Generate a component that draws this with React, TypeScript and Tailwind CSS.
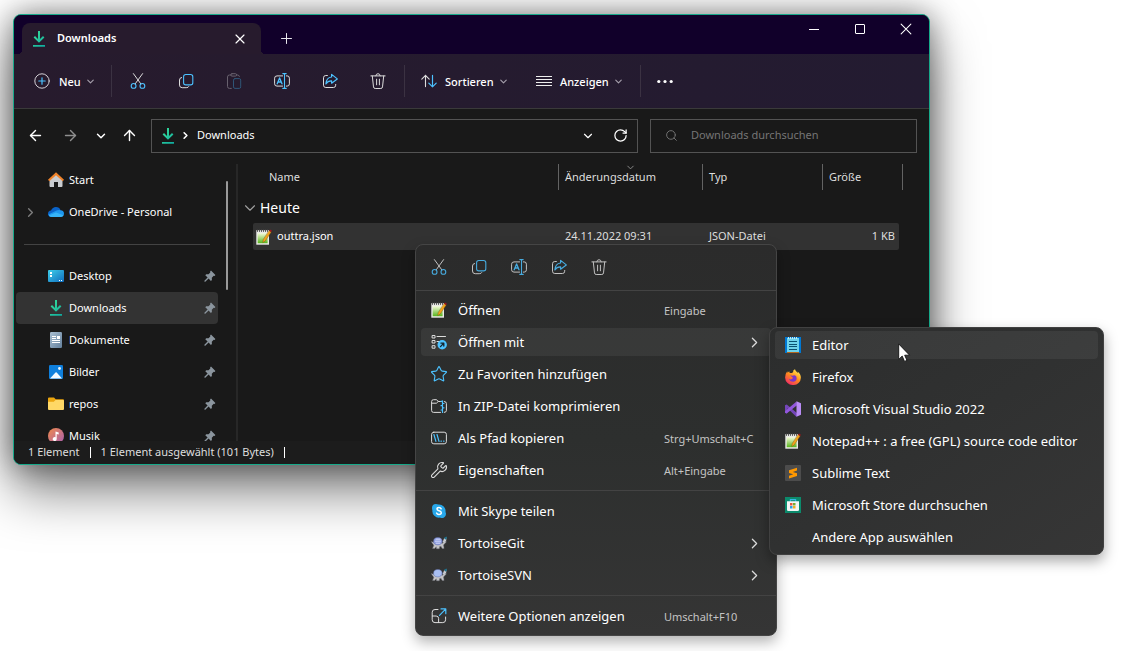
import type { ReactNode } from 'react';
import { ArrowLeft, ArrowRight, ArrowUp, ChevronDown, ChevronRight, RotateCw, Search, Star, Wrench, X } from 'lucide-react';

type IconProps = { className?: string };

const BLUE = '#4cc2ff';

function Glyph({ children, className = 'size-4' }: { children: ReactNode; className?: string }) {
  return (
    <svg viewBox="0 0 16 16" fill="none" strokeLinecap="round" strokeLinejoin="round" aria-hidden="true" className={`shrink-0 ${className}`}>
      {children}
    </svg>
  );
}

function NewIcon() {
  return (
    <Glyph>
      <circle cx="8" cy="8" r="7.2" stroke="#d4d0d6" />
      <path d="M8 4.8v6.4M4.8 8h6.4" stroke={BLUE} strokeWidth="1.2" />
    </Glyph>
  );
}

function CutIcon() {
  return (
    <Glyph>
      <path d="M3.4.6l7.4 10.2M12.6.6L5.2 10.8" stroke="#dcdcdc" />
      <circle cx="3.6" cy="12.9" r="2.4" stroke={BLUE} strokeWidth="1.1" />
      <circle cx="12.4" cy="12.9" r="2.4" stroke={BLUE} strokeWidth="1.1" />
    </Glyph>
  );
}

function CopyIcon() {
  return (
    <Glyph>
      <path d="M3.6 4.5Q1.5 4.7 1.5 7v5Q1.5 14.7 4.2 14.7h4Q10.4 14.7 10.8 13.6" stroke="#dcdcdc" />
      <rect x="5.6" y="1.5" width="9.2" height="10.4" rx="2.2" stroke={BLUE} strokeWidth="1.1" />
    </Glyph>
  );
}

function PasteIcon() {
  return (
    <Glyph>
      <path d="M4.8 2H3.4Q1.5 2 1.5 4v9.4q0 2 1.9 2h1.9M10.6 2h1q1.5.1 1.8 1.4" stroke="#68616e" />
      <rect x="4.8" y="0.7" width="5.8" height="2.4" rx="1.2" stroke="#68616e" />
      <rect x="7.5" y="5.6" width="7.2" height="9.8" rx="1.5" stroke="#2f5577" />
    </Glyph>
  );
}

function RenameIcon() {
  return (
    <Glyph>
      <path d="M8.6 2.9H3Q.6 2.9.6 5.2v5.6Q.6 13.1 3 13.1h5.6M12.3 2.9h.9q2.2 0 2.2 2.3v5.6q0 2.3-2.2 2.3h-.9" stroke="#dcdcdc" />
      <path d="M3.2 10.8l2.4-5.9L8 10.8M4 9h3.2" stroke={BLUE} strokeWidth="1.3" />
      <path d="M10.5.6v14.8M8.8.6h3.4M8.8 15.4h3.4" stroke={BLUE} strokeWidth="1.1" />
    </Glyph>
  );
}

function ShareIcon() {
  return (
    <Glyph>
      <path d="M5.4 2.5H3.8Q1.5 2.5 1.5 4.8v7.4q0 2.3 2.3 2.3h7.6q2.3 0 2.3-2.3v-.8" stroke="#dcdcdc" />
      <path d="M9.6 1.4l5.7 4.5-5.7 4.3V7.9Q6 7.7 3.9 10.9 4.3 4.6 9.6 4z" stroke={BLUE} strokeWidth="1.2" />
    </Glyph>
  );
}

function TrashIcon() {
  return (
    <Glyph>
      <path d="M.9 2.9h14.2M5.8 2.8Q6 .7 8 .7t2.200 2.100M2.300 3l1.200 10.900q.2 1.600 1.700 1.600h5.600q1.500 0 1.700-1.600L13.700 3M6.600 6.200v5.600M9.400 6.200v5.600" stroke="#dcdcdc" />
    </Glyph>
  );
}

function SortIcon() {
  return (
    <Glyph>
      <path d="M4.5 13.6V2.4M.8 6.2l3.7-3.8 3.7 3.8" stroke="#dcdcdc" strokeWidth="1.1" />
      <path d="M11.5 2.4v11.4M7.8 10.1l3.7 3.7 3.7-3.7" stroke={BLUE} strokeWidth="1.200" />
    </Glyph>
  );
}

function ListIcon() {
  return (
    <Glyph>
      <path d="M0 3.5h16M0 6.5h16M0 9.5h16M0 12.5h16" stroke="#eeeeee" strokeLinecap="butt" />
    </Glyph>
  );
}

function DotsIcon() {
  return (
    <Glyph>
      <g fill="#ffffff">
        <circle cx="1.8" cy="8.500" r="1.600" />
        <circle cx="8" cy="8.500" r="1.600" />
        <circle cx="14.2" cy="8.500" r="1.600" />
      </g>
    </Glyph>
  );
}

function DownloadIcon() {
  return (
    <Glyph>
      <defs>
        <linearGradient id="dl" x1="0" y1="0" x2="16" y2="16" gradientUnits="userSpaceOnUse">
          <stop offset="0.3" stopColor="#2fd39a" />
          <stop offset="1" stopColor="#0aa5a0" />
        </linearGradient>
      </defs>
      <path d="M7 0h2v8l3-3 1.400 1.400L8 11.800 2.600 6.400 4 5l3 3zM2 14h12v1.800H2z" fill="url(#dl)" />
    </Glyph>
  );
}

function HomeIcon() {
  return (
    <Glyph>
      <path d="M1.500 7.500L8 2l6.500 5.500V14q0 1-1 1H10v-5H6v5H2.500q-1 0-1-1z" fill="#c9ccd0" />
      <path d="M8 .2l8 7.500-1.300 1.500L8 3.200 1.300 9.200 0 7.700z" fill="#f0832a" />
    </Glyph>
  );
}

function CloudIcon() {
  return (
    <Glyph>
      <path d="M3.500 13Q0 12.600 0 9.700 0 7 3 6.600 4.500 3 8 3q3.300 0 4.600 3.200L9 11z" fill="#0a63c9" />
      <path d="M3.500 13Q.8 12.600.3 10.600L7.500 7q3-1.400 5.100-.8Q16 6.600 16 9.700T12.600 13z" fill="#1d96ee" />
      <path d="M3.500 13Q1.500 12.800.8 11.500L8 8.500l7.500 2.800Q14.700 13 12.600 13z" fill="#37b4f7" />
    </Glyph>
  );
}

function DesktopIcon() {
  return (
    <Glyph>
      <defs>
        <linearGradient id="desk" x1="0" y1="0" x2="1" y2="1">
          <stop stopColor="#3fd0ea" />
          <stop offset="1" stopColor="#0f6cbd" />
        </linearGradient>
      </defs>
      <rect y="2" width="16" height="12" rx="1" fill="url(#desk)" />
      <path d="M2 4h2v2H2zM2 7h2v2H2zM11 12h1v1h-1zM13 12h1v1h-1z" fill="#fff" />
    </Glyph>
  );
}

function DocumentsIcon() {
  return (
    <Glyph>
      <defs>
        <linearGradient id="docs" x1="0" y1="0" x2="1" y2="1">
          <stop stopColor="#a9bfd2" />
          <stop offset="1" stopColor="#64809c" />
        </linearGradient>
      </defs>
      <rect x="2" width="12" height="16" rx="1.200" fill="url(#docs)" />
      <path d="M4 4h4v1H4zM4 6h4v1H4zM9 4h3v3H9zM4 8h8v1H4zM4 10h8v1H4z" fill="#fff" />
    </Glyph>
  );
}

function PicturesIcon() {
  return (
    <Glyph>
      <rect x="1" y="1" width="14" height="14" rx="1.200" fill="#0f7fdc" />
      <path d="M2 14.500l5.500-6q.6-.6 1.200 0l5.300 6z" fill="#f2f9ff" />
      <circle cx="11.500" cy="4.500" r="1.400" fill="#f2f9ff" />
    </Glyph>
  );
}

function FolderIcon() {
  return (
    <Glyph>
      <path d="M0 2.500Q0 1.500 1 1.500h5l1.700 1.700H15q1 0 1 1V7H0z" fill="#eba50f" />
      <path d="M0 5.800h5.800L7.500 4H15q1 0 1 1v8q0 1-1 1H1q-1 0-1-1z" fill="#ffd866" />
    </Glyph>
  );
}

function MusicIcon() {
  return (
    <Glyph>
      <defs>
        <linearGradient id="music" x1="0" y1="0" x2="1" y2="1">
          <stop stopColor="#f08a4b" />
          <stop offset="1" stopColor="#a85fb0" />
        </linearGradient>
      </defs>
      <circle cx="8" cy="8" r="8" fill="url(#music)" />
      <path d="M7.500 3.500L10.700 4.500v2L8.700 6v5a2 2 0 1 1-1.200-1.800z" fill="#fff" />
    </Glyph>
  );
}

function PinIcon() {
  return (
    <svg viewBox="0 0 12 12" aria-hidden="true" className="size-3 shrink-0">
      <path d="M7 .6l4.400 4.400-.8 1-.9-.2-1.900 1.900.1 2.300-1 .9-2.300-2.300L1.300 11.700l-1-.1.1-.9 3.200-3.200L1.300 5.200l.9-1 2.300.1 1.800-1.900L6.100 1.500z" fill="#8b959e" />
    </svg>
  );
}

function NotepadPlusIcon() {
  return (
    <Glyph>
      <defs>
        <linearGradient id="npp" x1="0" y1="0" x2="0" y2="1">
          <stop stopColor="#f4fbd8" />
          <stop offset="1" stopColor="#57b41c" />
        </linearGradient>
      </defs>
      <rect x="0.300" y="1.200" width="12.700" height="14.500" fill="#e9e9e5" />
      <rect x="1.700" y="4.200" width="9.900" height="10" fill="url(#npp)" />
      <path d="M1.500.5v2.400M3.500.5v2.400M5.500.5v2.400M7.500.5v2.400M9.500.5v2.400M11.500.5v2.400" stroke="#4b4b4b" strokeWidth=".9" strokeLinecap="butt" />
      <path d="M13.300 1.600l1.900 1.300-6 9.200-2.500 1.500.5-2.800z" fill="#f0a31c" stroke="#7a5210" strokeWidth=".4" />
      <path d="M14 .4l1.900 1.300-.8 1.300-1.900-1.300z" fill="#a3141c" />
    </Glyph>
  );
}

function OpenWithIcon() {
  return (
    <Glyph>
      <path d="M1.500 1.500h2.500v2.500H1.500zM1.500 6.500h2.500v2.500H1.500zM1.500 11.700h2.500v2.500H1.500zM6 2.500h8.500M6 7.500h2.500" stroke="#dcdcdc" strokeLinejoin="miter" />
      <circle cx="11.200" cy="10.800" r="4.700" fill={BLUE} />
      <path d="M9.500 12.600l3.200-3.300M9.900 9.100h2.900V12" stroke="#14242e" strokeWidth="1.300" />
    </Glyph>
  );
}

function ZipIcon() {
  return (
    <Glyph>
      <path d="M9.500 3.500H7.200L5.600 1.700H2.500Q.6 1.700.6 3.600v8.900q0 1.900 1.900 1.900h7M.8 5.200h4.600l1.700-1.600M13.300 3.500q2.100 0 2.100 2v7q0 1.900-2.100 1.900" stroke="#dcdcdc" />
      <path d="M11.500 2.800v11.700M10 3.300h1.500M11.500 5.500H13M10 7.700h1.500M11.500 9.800H13M10 12h1.500" stroke={BLUE} strokeWidth="1.200" />
    </Glyph>
  );
}

function PathIcon() {
  return (
    <Glyph>
      <rect x=".6" y="2.200" width="14.800" height="11.600" rx="2.200" stroke="#dcdcdc" />
      <path d="M2.900 4.500l2 6.800M6 4.500l2 6.800M10 11.200h.4M12.600 11.200h.4" stroke={BLUE} strokeWidth="1.200" />
    </Glyph>
  );
}

function MoreOptionsIcon() {
  return (
    <Glyph>
      <path d="M7 1.500H4Q1.200 1.500 1.200 4.200v7.600q0 2.800 2.800 2.800h7.800q2.800 0 2.800-2.800V9M1.400 8h3.700Q7.600 8 7.600 10.500v4" stroke="#dcdcdc" />
      <path d="M8.500 7.300l6.100-6.200M10 .9h4.800v4.800" stroke={BLUE} strokeWidth="1.200" />
    </Glyph>
  );
}

function SkypeIcon() {
  return (
    <Glyph>
      <path d="M5 1q1.400 0 2.200.5A6.600 6.600 0 0 1 14.500 9q.5.800.5 2a4.100 4.100 0 0 1-6 3.600A6.600 6.600 0 0 1 1.400 7.200Q1 6.300 1 5a4 4 0 0 1 4-4z" fill="#28a8ea" />
      <path d="M10.200 5.800Q9.600 4.600 8 4.600q-2 0-2 1.500 0 1.300 2 1.700 2.300.5 2.300 2 0 1.700-2.300 1.700-1.900 0-2.400-1.400" stroke="#fff" strokeWidth="1.500" />
    </Glyph>
  );
}

function TortoiseIcon({ plain }: { plain?: boolean }) {
  return (
    <Glyph>
      <path d="M.2 6.500l3 1 8.300.8 2.500-2.300 1.500.8-3 3.200.6 3.400h-2l-1-2h-1.400l-.4 2.400H5.500l-.3-2-1.500 1.600H1.500l1.300-3z" fill="#c3c3c6" stroke="#6d6f76" strokeWidth=".4" />
      <path d="M11.500 7.500l1.400-3.700 2.700-1.500-.4 3-2 2.200z" fill="#c9ccd0" />
      <path d="M13.200 2.600l2.500-1.100v2.400l-1.500.6z" fill="#1a6f8c" />
      <ellipse cx="6.900" cy="6.200" rx="4.300" ry="3.700" fill={plain ? '#a9bff2' : '#8f9ee0'} stroke="#5e6da8" strokeWidth=".5" />
      {!plain && <path d="M4.300 6.200h5.200M5 4.200h4M5.200 8.200h3.800" stroke="#dfe6ff" strokeWidth=".8" />}
    </Glyph>
  );
}

function EditorIcon() {
  return (
    <Glyph>
      <path d="M0 0h16v16H0z" fill="#0078d4" />
      <path d="M2 1h12v14H2z" fill="#6fd3ec" />
      <path d="M2 15h12v1H2z" fill="#b5651d" />
      <path d="M3.500 0v2M5.500 0v2M7.500 0v2M9.500 0v2M11.500 0v2" stroke="#bfeaf6" strokeLinecap="butt" />
      <path d="M4 4.500h8M4 7.500h8M4 9.500h8M4 12.500h8" stroke="#0a5273" strokeLinecap="butt" />
    </Glyph>
  );
}

function FirefoxIcon() {
  return (
    <Glyph>
      <defs>
        <linearGradient id="ff" x1="0.800" y1="0.100" x2="0.200" y2="1">
          <stop stopColor="#ffe14a" />
          <stop offset="0.450" stopColor="#ff8a1c" />
          <stop offset="1" stopColor="#f0246c" />
        </linearGradient>
      </defs>
      <path d="M10 .2q.4 1.800 1.800 2.800l1.200 1.300q-.2-1-.6-1.700Q15.900 5 15.900 8.800A7.400 7.400 0 0 1 8.200 16 7.700 7.700 0 0 1 .1 8.400Q.1 5 2.200 2.300l.4 1.500L4.200 2.300l.5 1.600 2.200.2Q8.700 3.300 8.200 1.700 8.500.7 10 .2z" fill="url(#ff)" />
      <path d="M5 6.500q1.600-.2 2.600.3 2-1.300 3.700.7 1.400 4.200-2.600 5.200-4 .2-4.700-3 .9 1 2.300.6L7.800 9.200 7.500 8.300z" fill="#7a35c8" />
    </Glyph>
  );
}

function VisualStudioIcon() {
  return (
    <Glyph>
      <path d="M0 4.300L1.700 3.400 12 12v3.400l-1 .1L2.500 7.300v4.200l-1 1L0 11.700z" fill="#7446b8" />
      <path d="M11.500.4L12 4.200 1.700 12.600 0 11.700v-1.500z" fill="#9257dd" />
      <path d="M11.500.3L16 2.300v11.400l-4.500 2z" fill="#b98cf5" />
    </Glyph>
  );
}

function SublimeIcon() {
  return (
    <Glyph>
      <rect width="16" height="16" rx="1" fill="#4c4c4c" />
      <path d="M4 5.200l8-2.500v2.900L7.800 7 12 8.200v2.900l-8 2.500v-2.900l4.200-1.400L4 8.100z" fill="#ff9800" />
    </Glyph>
  );
}

function StoreIcon() {
  return (
    <Glyph>
      <path d="M0 0h16v16H0z" fill="#0c8a6c" />
      <path d="M5.300 4.500V2.600h5.400v1.900" stroke="#38b7e8" strokeWidth="1.100" />
      <path d="M2 4.300h12v8.400q0 1.300-1.300 1.300H3.300Q2 14 2 12.700z" fill="#f3f5f5" />
      <path d="M5 6h2.500v2.500H5z" fill="#e5543a" />
      <path d="M8 6h2.500v2.500H8z" fill="#75ab32" />
      <path d="M5 9h2.500v2.500H5z" fill="#2f9fe0" />
      <path d="M8 9h2.500v2.500H8z" fill="#f0b01e" />
    </Glyph>
  );
}

function Caret({ className = 'text-[#a59fab]' }: IconProps) {
  return <ChevronDown size={11} strokeWidth={2.500} className={`shrink-0 ${className}`} aria-hidden="true" />;
}

const commandTools = [
  { label: 'Ausschneiden', icon: <CutIcon /> },
  { label: 'Kopieren', icon: <CopyIcon /> },
  { label: 'Einfügen', icon: <PasteIcon />, disabled: true },
  { label: 'Umbenennen', icon: <RenameIcon /> },
  { label: 'Freigeben', icon: <ShareIcon /> },
  { label: 'Löschen', icon: <TrashIcon /> },
];

const pinned = [
  { label: 'Desktop', icon: <DesktopIcon /> },
  { label: 'Downloads', icon: <DownloadIcon />, active: true },
  { label: 'Dokumente', icon: <DocumentsIcon /> },
  { label: 'Bilder', icon: <PicturesIcon /> },
  { label: 'repos', icon: <FolderIcon /> },
  { label: 'Musik', icon: <MusicIcon /> },
];

type MenuEntry = { label: string; icon?: ReactNode; shortcut?: string; submenu?: boolean; active?: boolean };

const contextGroups: MenuEntry[][] = [
  [
    { label: 'Öffnen', icon: <NotepadPlusIcon />, shortcut: 'Eingabe' },
    { label: 'Öffnen mit', icon: <OpenWithIcon />, submenu: true, active: true },
    { label: 'Zu Favoriten hinzufügen', icon: <Star size={18} strokeWidth={1.500} className="-mx-px shrink-0 text-[#4cc2ff]" aria-hidden="true" /> },
    { label: 'In ZIP-Datei komprimieren', icon: <ZipIcon /> },
    { label: 'Als Pfad kopieren', icon: <PathIcon />, shortcut: 'Strg+Umschalt+C' },
    { label: 'Eigenschaften', icon: <Wrench size={18} strokeWidth={1.500} className="-mx-px shrink-0 text-[#dcdcdc]" aria-hidden="true" />, shortcut: 'Alt+Eingabe' },
  ],
  [
    { label: 'Mit Skype teilen', icon: <SkypeIcon /> },
    { label: 'TortoiseGit', icon: <TortoiseIcon />, submenu: true },
    { label: 'TortoiseSVN', icon: <TortoiseIcon plain />, submenu: true },
  ],
  [{ label: 'Weitere Optionen anzeigen', icon: <MoreOptionsIcon />, shortcut: 'Umschalt+F10' }],
];

const openWith: MenuEntry[] = [
  { label: 'Editor', icon: <EditorIcon />, active: true },
  { label: 'Firefox', icon: <FirefoxIcon /> },
  { label: 'Microsoft Visual Studio 2022', icon: <VisualStudioIcon /> },
  { label: 'Notepad++ : a free (GPL) source code editor', icon: <NotepadPlusIcon /> },
  { label: 'Sublime Text', icon: <SublimeIcon /> },
  { label: 'Microsoft Store durchsuchen', icon: <StoreIcon /> },
  { label: 'Andere App auswählen' },
];

function TitleBar() {
  return (
    <div className="flex h-[39px] items-end bg-[#11002a]">
      <div className="relative ml-2 flex h-[31px] w-[239px] items-center rounded-t-lg bg-[#271b2d] pl-[9px] before:absolute before:bottom-0 before:-left-1 before:size-1 before:bg-[radial-gradient(circle_at_0_0,transparent_4px,#271b2d_4px)] after:absolute after:-right-1 after:bottom-0 after:size-1 after:bg-[radial-gradient(circle_at_100%_0,transparent_4px,#271b2d_4px)]">
        <DownloadIcon />
        <span className="ml-2.5 text-[11px] font-semibold text-white">Downloads</span>
        <button aria-label="Tab schließen" className="mr-[13px] ml-auto flex size-4 items-center justify-center text-white">
          <X size={16} strokeWidth={1.750} />
        </button>
      </div>
      <button aria-label="Neuer Tab" className="ml-[17px] flex h-8 w-4 items-center justify-center">
        <Glyph>
          <path d="M8.500 3.500v10M3.500 8.500h10" stroke="#e8e6ec" />
        </Glyph>
      </button>
      <div className="ml-auto flex self-start">
        <button aria-label="Minimieren" className="flex h-7 w-[46px] items-center justify-center">
          <span className="h-px w-2.5 bg-white" />
        </button>
        <button aria-label="Maximieren" className="flex h-7 w-[46px] items-center justify-center">
          <span className="size-2.5 rounded-[1px] border border-white" />
        </button>
        <button aria-label="Schließen" className="flex h-7 w-[46px] items-center justify-center">
          <Glyph className="size-3">
            <path d="M1.500 1.500l13 13M14.500 1.500l-13 13" stroke="#fff" strokeWidth="1.400" />
          </Glyph>
        </button>
      </div>
    </div>
  );
}

function CommandBar() {
  const divider = <span className="h-8 w-px shrink-0 bg-[#3b3242]" />;
  return (
    <div className="flex h-[55px] items-center border-b border-[#3a3a3a] bg-linear-to-r from-[#271b2d] to-[#231b31] pl-5 text-[11px] font-medium text-white">
      <button className="flex w-[77px] items-center">
        <NewIcon />
        <span className="mr-1 ml-[9px] pt-0.5">Neu</span>
        <Caret />
      </button>
      {divider}
      <div className="mx-0.5 flex">
        {commandTools.map((tool) => (
          <button key={tool.label} aria-label={tool.label} disabled={tool.disabled} className="flex h-8 w-12 items-center justify-center">
            {tool.icon}
          </button>
        ))}
      </div>
      {divider}
      <button className="flex w-[115px] items-center pl-4">
        <SortIcon />
        <span className="mr-1 ml-2 pt-0.5">Sortieren</span>
        <Caret />
      </button>
      <button className="flex w-[120px] items-center pl-4">
        <ListIcon />
        <span className="mr-1 ml-2 pt-0.5">Anzeigen</span>
        <Caret />
      </button>
      {divider}
      <button aria-label="Mehr anzeigen" className="flex h-8 w-12 items-center justify-center">
        <DotsIcon />
      </button>
    </div>
  );
}

function NavigationBar() {
  return (
    <div className="flex h-[55px] items-center bg-[#191919] pr-3 pb-0.5 pl-[3px] text-white">
      <button aria-label="Zurück" className="flex h-8 w-9 items-center justify-center">
        <ArrowLeft size={17} strokeWidth={2} />
      </button>
      <button aria-label="Vorwärts" className="flex h-8 w-[34px] items-center justify-center text-[#8f8f8f]">
        <ArrowRight size={17} strokeWidth={2} />
      </button>
      <button aria-label="Zuletzt verwendete Orte" className="flex h-8 w-7 items-center justify-center">
        <ChevronDown size={14} strokeWidth={2.500} />
      </button>
      <button aria-label="Nach oben" className="mr-[7px] flex h-8 w-[29px] items-center justify-center">
        <ArrowUp size={17} strokeWidth={2} />
      </button>
      <div className="flex h-[34px] min-w-0 flex-1 items-center border border-[#535353] pl-2">
        <DownloadIcon />
        <ChevronRight size={11} strokeWidth={3.500} className="ml-1" aria-hidden="true" />
        <a href="#downloads" className="ml-1.5 text-[11px]">
          Downloads
        </a>
        <button aria-label="Vorherige Orte" className="ml-auto flex h-8 w-[33px] items-center justify-center">
          <ChevronDown size={14} strokeWidth={2} />
        </button>
        <button aria-label="Aktualisieren" className="flex h-8 w-[33px] items-center justify-center">
          <RotateCw size={15} strokeWidth={2} />
        </button>
      </div>
      <label className="ml-3 flex h-[34px] w-[267px] items-center border border-[#535353] pl-3.5 text-[#757575]">
        <Search size={13} strokeWidth={1.750} aria-hidden="true" />
        <input type="search" aria-label="Downloads durchsuchen" placeholder="Downloads durchsuchen" className="ml-[13px] min-w-0 flex-1 bg-transparent text-[11px] outline-none placeholder:text-[#757575]" />
      </label>
    </div>
  );
}

function Sidebar() {
  const row = 'flex h-8 items-center';
  return (
    <nav aria-label="Navigationsbereich" className="flex w-[224px] shrink-0 border-r-2 border-[#272727] pl-0.5 text-[11px] text-white">
      <ul className="w-[202px]">
        <li>
          <a href="#start" className={`${row} pl-8`}>
            <HomeIcon />
            <span className="ml-[5px]">Start</span>
          </a>
        </li>
        <li>
          <a href="#onedrive" className={row}>
            <span className="mr-1 flex w-7 justify-center text-[#7d7d7d]">
              <ChevronRight size={15} strokeWidth={2.250} aria-hidden="true" />
            </span>
            <CloudIcon />
            <span className="ml-[5px]">OneDrive - Personal</span>
          </a>
        </li>
        <li role="separator" className="flex h-8 items-center px-2">
          <span className="h-px flex-1 bg-[#434343]" />
        </li>
        {pinned.map((place) => (
          <li key={place.label}>
            <a href={`#${place.label}`} className={`${row} pr-0.5 pl-8 ${place.active ? 'rounded-sm bg-[#333333]' : ''}`}>
              {place.icon}
              <span className="ml-[5px] flex-1">{place.label}</span>
              <PinIcon />
            </a>
          </li>
        ))}
      </ul>
      <span className="mt-[17px] ml-2 h-[109px] w-0.5 rounded-full bg-[#9a9a9a]" />
    </nav>
  );
}

function FileList() {
  const head = 'border-r border-[#636363] p-0 text-left font-normal text-[#dedede]';
  return (
    <div className="min-w-0 flex-1 pr-[26px]">
      <table className="w-full table-fixed border-separate border-spacing-0 text-[11px]">
        <colgroup>
          <col className="w-[15px]" />
          <col />
          <col className="w-[144px]" />
          <col className="w-[120px]" />
          <col className="w-[76px]" />
          <col className="w-1" />
        </colgroup>
        <thead>
          <tr className="h-[26px]">
            <th colSpan={2} className={`${head} pl-[31px]`}>
              Name
            </th>
            <th aria-sort="descending" className={`${head} relative pl-1.5`}>
              Änderungsdatum
              <ChevronDown size={11} strokeWidth={1.750} className="absolute -top-0.5 left-[66px] text-[#a0a0a0]" aria-hidden="true" />
            </th>
            <th className={`${head} pl-1.5`}>Typ</th>
            <th colSpan={2} className={`${head} pl-1.5`}>
              Größe
            </th>
          </tr>
        </thead>
        <tbody>
          <tr className="h-[33px]">
            <td colSpan={6} className="p-0 pt-0.5 pl-[3px] text-sm text-white">
              <span className="flex items-center gap-px">
                <ChevronDown size={18} strokeWidth={1.500} className="text-[#a0a0a0]" aria-hidden="true" />
                Heute
              </span>
            </td>
          </tr>
          <tr className="h-[27px] text-[#dedede]">
            <td className="p-0" />
            <td className="rounded-l-xs bg-[#323232] p-0 pl-[3px] text-white">
              <span className="flex items-center gap-[5px]">
                <NotepadPlusIcon />
                outtra.json
              </span>
            </td>
            <td className="bg-[#323232] p-0 pl-1.5">24.11.2022 09:31</td>
            <td className="bg-[#323232] p-0 pl-1.5">JSON-Datei</td>
            <td className="rounded-r-xs bg-[#323232] p-0 pr-1 text-right">1 KB</td>
            <td className="p-0" />
          </tr>
        </tbody>
      </table>
    </div>
  );
}

function MenuItem({ entry }: { entry: MenuEntry }) {
  return (
    <li role="none" className="flex h-8 items-center px-[5px]">
      <button role="menuitem" aria-haspopup={entry.submenu ? 'menu' : undefined} className={`flex h-7 w-full items-center rounded px-2.5 text-left text-white ${entry.active ? 'bg-white/6' : ''}`}>
        <span className="mr-[11px] flex size-4 shrink-0 items-center justify-center">{entry.icon}</span>
        <span className="flex-1 pt-0.5 whitespace-nowrap">{entry.label}</span>
        {entry.shortcut && <span className="w-[97px] shrink-0 pt-0.5 text-[11px] whitespace-nowrap text-[#c4c4c4]">{entry.shortcut}</span>}
        {entry.submenu && <ChevronRight size={17} strokeWidth={1.750} className="-mr-0.5 text-[#dcdcdc]" aria-hidden="true" />}
      </button>
    </li>
  );
}

function ContextMenu() {
  return (
    <div role="menu" aria-label="Kontextmenü" className="absolute top-[244px] left-[415px] w-[362px] rounded-lg border border-[#454545] bg-linear-to-b from-[#2b2b2b] via-[#2d2f2e] to-[#353535] pb-[3px] text-[13px] shadow-[0_6px_14px_rgba(0,0,0,0.300)]">
      <div className="flex h-[45px] items-center pb-0.5 pl-[3px] opacity-85">
        {commandTools
          .filter((tool) => !tool.disabled)
          .map((tool) => (
            <button key={tool.label} role="menuitem" aria-label={tool.label} className="flex h-8 w-10 items-center justify-center">
              {tool.icon}
            </button>
          ))}
      </div>
      {contextGroups.map((group) => (
        <ul key={group[0].label} role="group" className="border-t border-[#434343] py-1 first-of-type:pt-[3px] last:pb-0">
          {group.map((entry) => (
            <MenuItem key={entry.label} entry={entry} />
          ))}
        </ul>
      ))}
    </div>
  );
}

function OpenWithMenu() {
  return (
    <ul role="menu" aria-label="Öffnen mit" className="absolute top-[327px] left-[769px] w-[335px] rounded-lg border border-[#414141] bg-linear-to-br from-[#2c2d2d] via-[#303131] to-[#363636] py-px text-[13px] shadow-[0_6px_14px_rgba(0,0,0,0.350)]">
      {openWith.map((entry) => (
        <MenuItem key={entry.label} entry={entry} />
      ))}
    </ul>
  );
}

function Pointer() {
  return (
    <svg viewBox="0 0 13 20" aria-hidden="true" className="pointer-events-none absolute top-[343px] left-[898px] h-5 w-[13px]">
      <path d="M.7.900v15.500l3.500-3.300 2.300 5.300 2.500-1-2.300-5.200h4.900z" fill="#fff" stroke="#111" strokeWidth=".9" />
    </svg>
  );
}

export default function App() {
  return (
    <div className="relative min-h-screen overflow-hidden bg-white pt-3.5 pr-[191px] pl-[13px] font-['Noto_Sans','Open_Sans',sans-serif]">
      <main className="overflow-hidden rounded-lg border border-[#17a98a] bg-[#191919] shadow-[0_26px_52px_rgba(0,0,0,0.500),0_0_30px_rgba(0,0,0,0.450)]">
        <TitleBar />
        <CommandBar />
        <NavigationBar />
        <div className="flex h-[277px] overflow-hidden">
          <Sidebar />
          <FileList />
        </div>
        <footer className="flex h-[23px] items-center bg-[#1c1c1c] pl-3.5 text-[11px] text-[#dedede]">
          <span>1 Element</span>
          <span className="mx-2.5 h-[11px] w-px bg-white" />
          <span>1 Element ausgewählt (101 Bytes)</span>
          <span className="mx-2.5 h-[11px] w-px bg-white" />
        </footer>
      </main>
      <ContextMenu />
      <OpenWithMenu />
      <Pointer />
    </div>
  );
}
